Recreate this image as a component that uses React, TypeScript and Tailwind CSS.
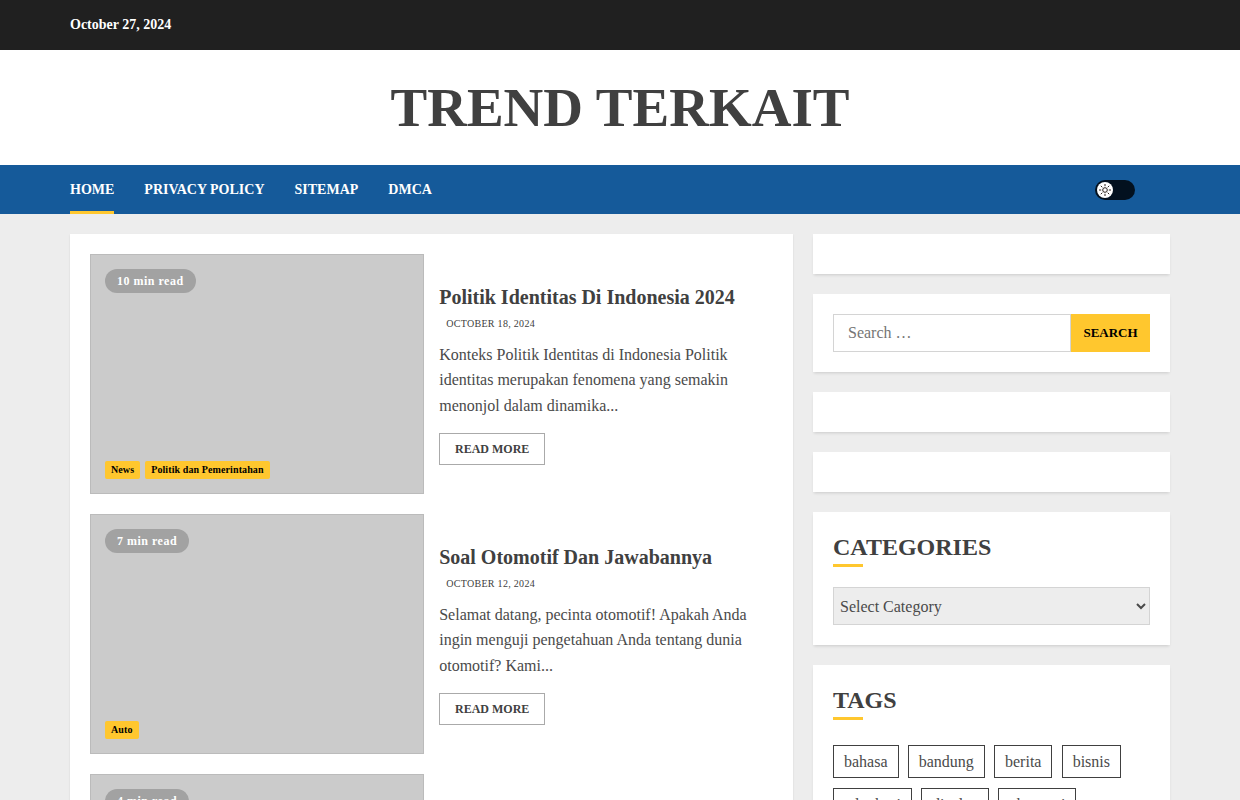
import type { ReactNode } from "react";

const posts = [
  {
    read: "10 min read",
    cats: ["News", "Politik dan Pemerintahan"],
    title: "Politik Identitas Di Indonesia 2024",
    date: "October 18, 2024",
    lines: ["Konteks Politik Identitas di Indonesia Politik", "identitas merupakan fenomena yang semakin", "menonjol dalam dinamika..."],
  },
  {
    read: "7 min read",
    cats: ["Auto"],
    title: "Soal Otomotif Dan Jawabannya",
    date: "October 12, 2024",
    lines: ["Selamat datang, pecinta otomotif! Apakah Anda", "ingin menguji pengetahuan Anda tentang dunia", "otomotif? Kami..."],
  },
  { read: "4 min read", cats: [], title: "", date: "", lines: [] },
];

const tagRows = [
  ["bahasa", "bandung", "berita", "bisnis"],
  ["advokasi", "display", "ekonomi"],
];

function Widget({ title, children }: { title?: string; children?: ReactNode }) {
  return (
    <section className="min-h-10 bg-white p-5 shadow-[0_2px_3px_-1px_rgba(0,0,0,0.15)]">
      {title && (
        <h2 className="h-[35px] text-[24px] leading-[31px] font-bold text-[#404040] uppercase">
          {title}
          <span className="mt-[1px] block h-[3px] w-[30px] bg-[#ffc72e]" />
        </h2>
      )}
      {children}
    </section>
  );
}

function Post({ post }: { post: (typeof posts)[number] }) {
  return (
    <article className="flex h-60 items-center">
      <div className="flex h-60 w-[334px] shrink-0 flex-col items-start justify-between border border-[#bbb] bg-[#cbcbcb] p-[14px]">
        <span className="h-6 rounded-full bg-[#a2a2a2] px-3 text-[12px] leading-6 font-bold tracking-[0.5px] text-white">{post.read}</span>
        <div className="flex gap-[5px]">
          {post.cats.map((c) => (
            <span key={c} className="h-[18px] rounded-[2px] bg-[#ffc72e] px-[6px] text-[10px] leading-[18px] font-bold tracking-[0.1px] text-black">
              {c}
            </span>
          ))}
        </div>
      </div>
      {post.title && (
        <div className="ml-[15.2px] pt-px whitespace-nowrap">
          <h3 className="text-[20px] leading-[26px] font-bold text-[#404040]">{post.title}</h3>
          <p className="mt-[6px] ml-[7px] text-[10px] leading-[15px] tracking-[0.3px] text-[#404040] uppercase">{post.date}</p>
          <div className="mt-[10.6px] text-[16px] leading-[25.6px] text-[#4a4a4a]">
            {post.lines.map((l) => (
              <p key={l}>{l}</p>
            ))}
          </div>
          <a className="mt-[14.4px] block h-8 w-[106px] border border-[#aaa] text-center text-[12px] leading-[30px] font-bold text-[#404040]">READ MORE</a>
        </div>
      )}
    </article>
  );
}

export default function App() {
  return (
    <div className="h-[800px] overflow-hidden bg-[#ededed] font-['Liberation_Serif',serif]">
      <div className="h-[50px] bg-[#202020] px-[70px] text-[14px] leading-[49px] font-bold text-white">October 27, 2024</div>
      <header className="h-[115px] bg-white text-center text-[55px] leading-[115px] font-bold text-[#404040]">TREND TERKAIT</header>
      <nav className="flex h-[49px] items-center gap-[30px] bg-[#155a9a] px-[70px] text-[14px] leading-[49px] font-bold text-white">
        <a className="h-[49px] border-b-[3px] border-[#ffc72e]">HOME</a>
        <a>PRIVACY POLICY</a>
        <a>SITEMAP</a>
        <a>DMCA</a>
        <span className="mt-[1px] mr-[35px] ml-auto flex h-5 w-10 items-center rounded-full bg-[#03111f] px-[2px]">
          <span className="flex size-4 items-center justify-center rounded-full bg-white">
            <svg viewBox="0 0 14 14" className="size-[14px]" fill="none" stroke="#2b211b" strokeWidth="1">
              <circle cx="7" cy="7" r="2.3" />
              <path d="M7 1v2.2M7 10.8V13M1 7h2.2M10.8 7H13M2.8 2.8l1.5 1.5M9.7 9.7l1.5 1.5M11.2 2.8L9.7 4.3M4.3 9.7l-1.5 1.5" />
            </svg>
          </span>
        </span>
      </nav>
      <div className="flex items-start gap-5 px-[70px] pt-5">
        <main className="flex w-[723px] flex-col gap-5 bg-white p-5 shadow-[0_1px_2px_rgba(0,0,0,0.1)]">
          {posts.map((p) => (
            <Post key={p.read} post={p} />
          ))}
        </main>
        <aside className="flex w-[357px] flex-col gap-5">
          <Widget />
          <Widget>
            <div className="flex h-[38px]">
              <input className="w-[238px] border border-[#d4d4d4] px-[14px] text-[16px] placeholder:text-[#757575]" placeholder="Search …" />
              <button className="grow bg-[#ffc72e] text-[13px] font-bold text-black">SEARCH</button>
            </div>
          </Widget>
          <Widget />
          <Widget />
          <Widget title="Categories">
            <select className="mt-5 block h-[38px] w-full border border-[#d4d4d4] bg-[#ededed] px-[2px] text-[16px] text-[#4a4a4a]">
              <option>Select Category</option>
            </select>
          </Widget>
          <Widget title="Tags">
            <div className="mt-[25px] flex flex-col gap-[10px]">
              {tagRows.map((row) => (
                <div key={row[0]} className="flex gap-[9.2px]">
                  {row.map((t) => (
                    <a key={t} className="h-[33px] border border-[#404040] px-[10px] text-[16px] leading-[31px] text-[#4a4a4a]">
                      {t}
                    </a>
                  ))}
                </div>
              ))}
            </div>
          </Widget>
        </aside>
      </div>
    </div>
  );
}
